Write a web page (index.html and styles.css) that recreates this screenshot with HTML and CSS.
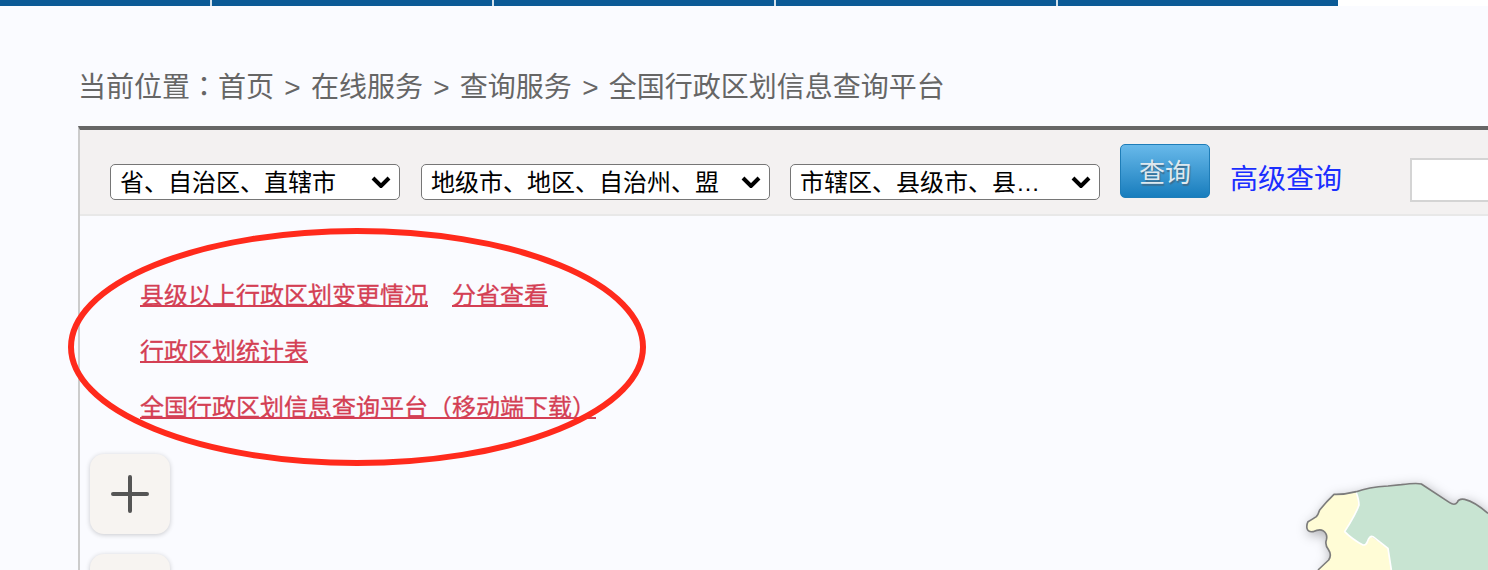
FILE: index.html
```html
<!DOCTYPE html>
<html lang="zh-CN">
<head>
  <meta charset="UTF-8" />
  <title>全国行政区划信息查询平台</title>
  <link rel="stylesheet" href="styles.css">
</head>
<body>

  <div class="top-nav">
    <div class="nav-item nav-first"></div>
    <div class="nav-item"></div>
    <div class="nav-item"></div>
    <div class="nav-item"></div>
    <div class="nav-item nav-last"></div>
  </div>

  <div class="breadcrumb">当前位置<span class="punct" lang="zh-TW">：</span>首页 &gt; 在线服务 &gt; 查询服务 &gt; 全国行政区划信息查询平台</div>

  <div class="panel">

    <div class="toolbar">
      <select class="sel sel-province"><option>省、自治区、直辖市</option></select>
      <select class="sel sel-city"><option>地级市、地区、自治州、盟</option></select>
      <select class="sel sel-county"><option>市辖区、县级市、县、自治县、旗</option></select>
      <button class="search-btn">查询</button>
      <a class="adv-link" href="#">高级查询</a>
      <input class="name-input" type="text" />
    </div>

    <div class="map-area">

      <svg class="map" viewBox="0 0 600 300" width="200" height="100">
        <path class="land-yellow" d="M138 73 Q115 95 95 120 Q90 135 85 140 Q70 150 60 155 Q55 165 57 175 Q60 187 75 185 Q95 176 105 182 Q120 192 115 210 Q110 225 122 240 Q132 255 122 270 L90 300 L320 300 L300 235 L248 198 L205 68 L170 72 Z" />
        <path class="land-green" d="M205 68 Q213 90 213 105 Q205 130 170 185 Q195 210 225 225 Q235 225 238 215 Q245 195 255 200 L300 235 L310 300 L600 300 L600 130 Q560 95 530 88 Q512 85 508 97 Q500 108 485 98 L400 42 Q385 38 340 44 L300 48 Q240 52 205 65 Z" />
        <path class="land-edge" d="M600 130 Q560 95 530 88 Q512 85 508 97 Q500 108 485 98 L400 42 Q385 38 340 44 L300 48 Q240 52 205 65 Q170 74 138 73 Q115 95 95 120 Q90 135 85 140 Q70 150 60 155 Q55 165 57 175 Q60 187 75 185 Q95 176 105 182 Q120 192 115 210 Q110 225 122 240 Q132 255 122 270 L90 300" />
        <path class="land-divide" d="M205 68 Q213 90 213 105 Q205 130 170 185 Q195 210 225 225 Q235 225 238 215 Q245 195 255 200 L300 235 L310 300" />
      </svg>

      <div class="links">
        <p><a href="#">县级以上行政区划变更情况</a><a class="link-gap" href="#">分省查看</a></p>
        <p><a href="#">行政区划统计表</a></p>
        <p><a href="#">全国行政区划信息查询平台（移动端下载）</a></p>
      </div>

      <div class="zoom-btns">
        <div class="zoom-btn">
          <svg viewBox="0 0 40 40" width="40" height="40"><path d="M3 20 H37 M20 3 V37" /></svg>
        </div>
        <div class="zoom-btn"></div>
      </div>

      <svg class="circle" viewBox="0 0 578 238" width="578" height="238">
        <ellipse cx="289" cy="119" rx="286" ry="116" />
      </svg>

    </div>

  </div>

</body>
</html>
```

FILE: styles.css
```css
* {
  margin: 0;
  padding: 0;
  box-sizing: border-box;
}

html, body {
  height: 570px;
  overflow: hidden;
}

body {
  font-family: "Liberation Sans", "Noto Sans CJK SC", sans-serif;
  background-color: #fafbff;
  color: #666;
}

/* centred colon */
.punct {
  font-family: "Noto Sans CJK TC", sans-serif;
  line-height: 0;
}

.top-nav {
  display: flex;
  height: 6px;
  background-color: #fff;
}

.nav-item {
  width: 282px;
  background-color: #0b5a96;
  border-right: 2px solid #d5e2ec;
}

.nav-first {
  width: 212px;
}

.nav-last {
  width: 280px;
  border-right: none;
}

.breadcrumb {
  margin: 60px 0 0 78px;
  height: 60px;
  line-height: 44px;
  font-size: 28px;
  word-spacing: 2.5px;
  color: #666;
}

.panel {
  margin-left: 78px;
  border-top: 4px solid #666;
  border-left: 2px solid #ccc;
  height: 444px;
}

.toolbar {
  display: flex;
  align-items: flex-start;
  height: 86px;
  background-color: #f3f1f1;
  border-bottom: 2px solid #e8e8e8;
  overflow: hidden;
}

.sel {
  appearance: none;
  height: 36px;
  margin-top: 34px;
  padding: 0 40px 0 9px;
  font-family: inherit;
  font-size: 24px;
  color: #000;
  text-overflow: ellipsis;
  background-color: #fff;
  background-image: url("data:image/svg+xml,%3Csvg xmlns='http://www.w3.org/2000/svg' width='20' height='12'%3E%3Cpath d='M2 2 L10 10 L18 2' fill='none' stroke='%23000' stroke-width='4'/%3E%3C/svg%3E");
  background-repeat: no-repeat;
  background-position: right 8px center;
  border: 1px solid #767676;
  border-radius: 5px;
  flex-shrink: 0;
}

.sel-province {
  width: 290px;
  margin-left: 30px;
}

.sel-city {
  width: 349px;
  margin-left: 21px;
}

.sel-county {
  width: 310px;
  margin-left: 20px;
}

.search-btn {
  width: 90px;
  height: 54px;
  margin: 14px 0 0 20px;
  padding-bottom: 2px;
  flex-shrink: 0;
  font-family: inherit;
  font-size: 26px;
  color: #dfe8ee;
  text-shadow: 1px 2px 1px #3d6f90;
  background: linear-gradient(#68b9ea, #187dbd);
  border: 1px solid #1e7db8;
  border-radius: 5px;
}

.adv-link {
  margin: 28px 0 0 20px;
  flex-shrink: 0;
  font-size: 28px;
  line-height: 44px;
  color: #1a2eff;
  text-decoration: none;
}

.name-input {
  width: 200px;
  height: 44px;
  margin: 28px 0 0 68px;
  flex-shrink: 0;
  background-color: #fff;
  border: 2px solid #d4d4d4;
}

.map-area {
  position: relative;
  height: 354px;
  padding: 52px 0 0 60px;
}

.links p {
  height: 56px;
  line-height: 56px;
  font-size: 24px;
}

.links a {
  color: #d43f54;
  -webkit-text-stroke: 0.3px #d43f54;
  text-decoration-thickness: 2px;
}

.link-gap {
  margin-left: 24px;
}

/* second button is cut by the window, keep it inside the page height */
.zoom-btns {
  position: absolute;
  left: 4px;
  top: 232px;
  height: 122px;
  padding: 6px;
  overflow: hidden;
  display: flex;
  flex-direction: column;
  gap: 20px;
}

.zoom-btn {
  display: flex;
  align-items: center;
  justify-content: center;
  width: 80px;
  height: 80px;
  flex-shrink: 0;
  background-color: #f7f4f1;
  border-radius: 14px;
  box-shadow: 0 1px 5px rgba(0, 0, 0, 0.2);
}

.zoom-btn path {
  fill: none;
  stroke: #555;
  stroke-width: 4;
  stroke-linecap: round;
}

.circle {
  position: absolute;
  left: -12px;
  top: 12px;
}

.circle ellipse {
  fill: none;
  stroke: #ff2a1c;
  stroke-width: 6;
}

.map {
  position: absolute;
  left: 1208px;
  top: 254px;
  overflow: visible;
  filter: drop-shadow(2px 3px 6px rgba(0, 0, 0, 0.3));
}

.land-yellow {
  fill: #fffcd6;
}

.land-green {
  fill: #c8e4d2;
}

.land-edge {
  fill: none;
  stroke: #7c7c7c;
  stroke-width: 5;
  stroke-linejoin: round;
}

.land-divide {
  fill: none;
  stroke: #fff;
  stroke-width: 5;
  stroke-linejoin: round;
}
```
